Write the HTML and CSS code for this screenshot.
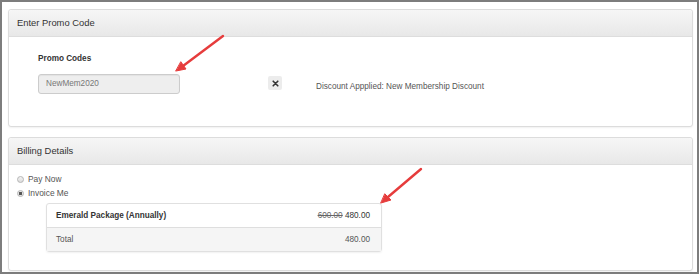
FILE: index.html
```html
<!DOCTYPE html>
<html lang="en">
<head>
    <meta charset="UTF-8">
    <meta name="viewport" content="width=device-width, initial-scale=1.0">
    <title>Promo Code</title>
    <link rel="stylesheet" href="styles.css">
</head>
<body>
    <div class="frame">
        <div class="panel panel-promo">
            <div class="panel-heading">Enter Promo Code</div>
            <div class="panel-body promo-body">
                <div class="field-label">Promo Codes</div>
                <div class="promo-row">
                    <div class="promo-input">NewMem2020</div>
                    <button class="remove-btn" title="Remove">
                        <svg width="7" height="7" viewBox="0 0 7 7">
                            <path d="M1.2 1.2 L5.8 5.8 M5.8 1.2 L1.2 5.8" stroke="#333" stroke-width="1.6" stroke-linecap="round"/>
                        </svg>
                    </button>
                    <div class="discount-msg">Discount Appplied: New Membership Discount</div>
                </div>
            </div>
        </div>

        <div class="panel panel-billing">
            <div class="panel-heading">Billing Details</div>
            <div class="panel-body billing-body">
                <label class="radio-line"><span class="radio"></span>Pay Now</label>
                <label class="radio-line"><span class="radio checked"></span>Invoice Me</label>

                <div class="order-table">
                    <div class="order-row">
                        <span class="item-name">Emerald Package (Annually)</span>
                        <span class="price"><s class="old-price">600.00</s> 480.00</span>
                    </div>
                    <div class="order-row total-row">
                        <span>Total</span>
                        <span class="price">480.00</span>
                    </div>
                </div>
            </div>
        </div>

        <!-- callout arrows -->
        <svg class="arrows" width="700" height="275" viewBox="0 0 700 275">
            <g stroke="#e63c3c" stroke-width="2.4" stroke-linecap="round" fill="#e63c3c">
                <line x1="223" y1="36" x2="183" y2="66"/>
                <polygon points="176,71 186,69 181,62" stroke-width="1" stroke-linejoin="round"/>
                <line x1="421" y1="169" x2="388" y2="197"/>
                <polygon points="381,203 391,200 385,194" stroke-width="1" stroke-linejoin="round"/>
            </g>
        </svg>
    </div>
</body>
</html>
```

FILE: styles.css
```css
body {
    margin: 0;
    font-family: 'Liberation Sans', Arial, sans-serif;
    background: #ffffff;
    color: #333;
}

.frame {
    position: relative;
    box-sizing: border-box;
    width: 699px;
    height: 274px;
    border: 2px solid #7d7d7d;
    padding: 7px 4px 0 6px;
    background: #fff;
}

.panel {
    border: 1px solid #dcdcdc;
    border-radius: 3px;
    box-shadow: 0 1px 2px rgba(0, 0, 0, 0.06);
    background: #fff;
}

.panel-billing {
    margin-top: 10px;
}

.panel-heading {
    height: 26px;
    line-height: 26px;
    padding-left: 8px;
    font-size: 9.4px;
    color: #333;
    background: linear-gradient(#f6f6f6, #e8e8e8);
    border-bottom: 1px solid #dddddd;
    border-radius: 3px 3px 0 0;
}

.panel-body {
    font-size: 8.2px;
}

.promo-body {
    padding: 15px 8px 32px 29px;
}

.field-label {
    font-weight: bold;
    line-height: 14px;
    color: #333;
}

.promo-row {
    display: flex;
    align-items: flex-start;
    margin-top: 8px;
}

.promo-input {
    box-sizing: border-box;
    width: 142px;
    height: 20px;
    line-height: 18px;
    padding-left: 7px;
    color: #777;
    background: #eeeeee;
    border: 1px solid #cccccc;
    border-radius: 3px;
    box-shadow: inset 0 1px 1px rgba(0, 0, 0, 0.05);
}

.remove-btn {
    display: flex;
    align-items: center;
    justify-content: center;
    width: 14px;
    height: 14px;
    margin: 2px 0 0 88px;
    padding: 0;
    border: none;
    border-radius: 2px;
    background: #ececec;
}

.discount-msg {
    margin: 6px 0 0 34px;
    line-height: 14px;
    color: #555;
}

.billing-body {
    padding: 7px 8px 18px 8px;
}

.radio-line {
    display: flex;
    align-items: center;
    height: 14px;
    color: #555;
    font-size: 8.4px;
}

.radio {
    box-sizing: border-box;
    width: 7px;
    height: 7px;
    margin-right: 4px;
    border: 1px solid #b5b5b5;
    border-radius: 50%;
    background: linear-gradient(#f3f3f3, #dcdcdc);
}

.radio.checked {
    background: radial-gradient(circle, #555 0 1.4px, #e4e4e4 1.8px);
}

.order-table {
    width: 334px;
    margin: 3px 0 0 29px;
    border: 1px solid #e0e0e0;
    border-radius: 3px;
    box-shadow: 0 1px 2px rgba(0, 0, 0, 0.06);
}

.order-row {
    display: flex;
    justify-content: space-between;
    align-items: center;
    box-sizing: border-box;
    height: 23px;
    padding: 0 11px 0 9px;
    color: #333;
}

.total-row {
    height: 24px;
    border-top: 1px solid #dedede;
    background: #f5f5f5;
    color: #555;
}

.item-name {
    font-weight: bold;
}

.old-price {
    color: #666;
}

.arrows {
    position: absolute;
    top: -2px;
    left: -2px;
    pointer-events: none;
}
```
